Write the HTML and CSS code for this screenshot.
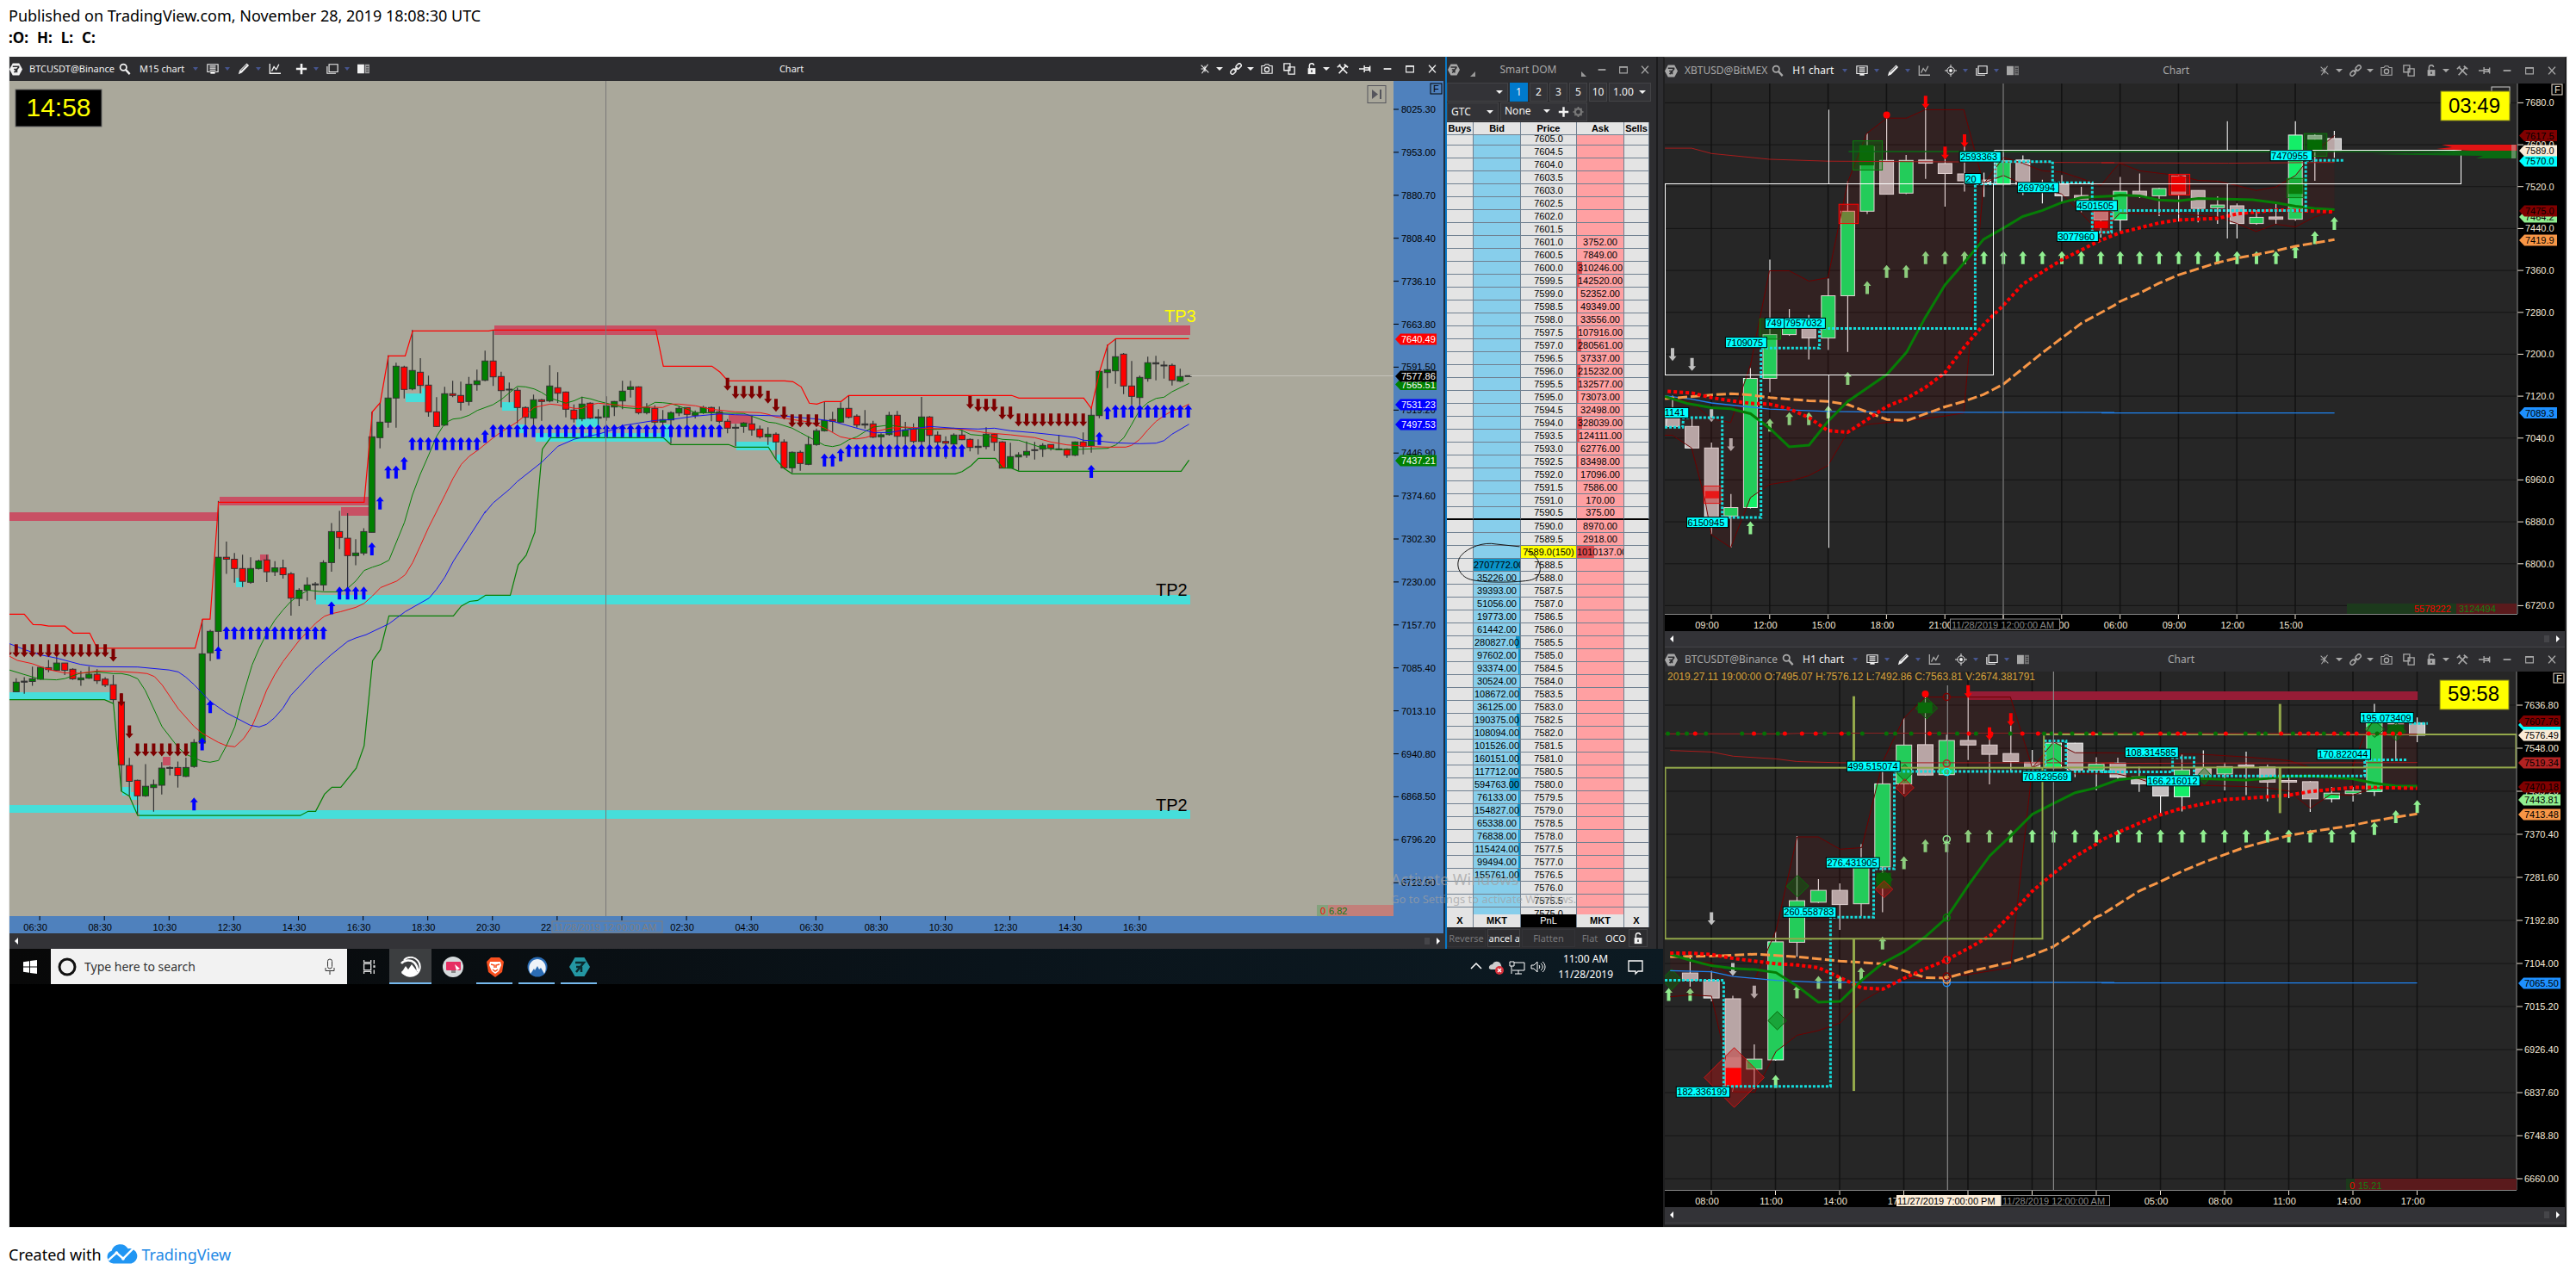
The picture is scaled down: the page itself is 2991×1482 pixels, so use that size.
FILE: index.html
```html
<!DOCTYPE html>
<html lang="en">
<head>
<meta charset="utf-8">
<title>TradingView snapshot</title>
<link rel="stylesheet" href="styles.css">
</head>
<body>
<svg class="sprite" aria-hidden="true">
  <symbol id="logo" viewBox="0 0 16 16"><path fill="currentColor" d="M4 .5h8l4 7.5-4 7.5H4L0 8z"/><path d="M4 4.5h8M12 4.5 6 12M5.500 8H10M9 8v4" stroke="#2d2d30" stroke-width="1.8" fill="none"/></symbol>
  <symbol id="search" viewBox="0 0 16 16"><circle cx="6" cy="6" r="4.200" fill="none" stroke="currentColor" stroke-width="2"/><path d="m9 9 5.500 6" stroke="currentColor" stroke-width="2.600"/></symbol>
  <symbol id="template" viewBox="0 0 16 16"><path d="M1 2h14v10H1zM4 4.500h8M4 7h8M4 9.500h8" fill="none" stroke="currentColor" stroke-width="1.300"/><path d="M5 12.500h6v2H5z" fill="currentColor"/></symbol>
  <symbol id="pencil" viewBox="0 0 16 16"><path d="m1 15 1.500-5L12 .5 15 3.500 5.500 13z" fill="currentColor"/><path d="m4 10.500 8-8" stroke="#2d2d30" stroke-width="1"/></symbol>
  <symbol id="indicator" viewBox="0 0 16 16"><path d="M1.500 1v13H16M4 11l3-6 3 4 3.500-7" fill="none" stroke="currentColor" stroke-width="1.500"/></symbol>
  <symbol id="plus" viewBox="0 0 16 16"><path d="M8 1v14M1 8h14" stroke="currentColor" stroke-width="3"/></symbol>
  <symbol id="target" viewBox="0 0 16 16"><circle cx="8" cy="8" r="4.800" fill="none" stroke="currentColor"/><circle cx="8" cy="8" r="2.200" fill="currentColor"/><path d="M8 0v4M8 12v4M0 8h4M12 8h4" stroke="currentColor"/></symbol>
  <symbol id="frames" viewBox="0 0 16 16"><path d="M3.500 2H15v10H3.500zM1 4.500V14h11.500" fill="none" stroke="currentColor" stroke-width="1.300"/></symbol>
  <symbol id="panel" viewBox="0 0 16 16"><path d="M0 2h9v12H0z" fill="currentColor"/><path d="M10 2h6v12h-6z" fill="currentColor" opacity=".55"/><path d="M11.500 5H15M11.500 8H15M11.500 11H15" stroke="#2d2d30"/></symbol>
  <symbol id="burst" viewBox="0 0 16 16"><path d="m3 3 10 10M12 2 4 14M8 4v8M3 8h4" stroke="currentColor" stroke-width="1.200"/></symbol>
  <symbol id="chain" viewBox="0 0 16 16"><g fill="none" stroke="currentColor" stroke-width="1.700" transform="rotate(-45 8 8)"><rect x="-1" y="5.500" width="8" height="5" rx="2.500"/><rect x="9" y="5.500" width="8" height="5" rx="2.500"/><path d="M5 8h6"/></g></symbol>
  <symbol id="camera" viewBox="0 0 16 16"><path d="M1 4h3.500L6 2h4l1.500 2H15v10H1z" fill="none" stroke="currentColor" stroke-width="1.300"/><circle cx="8" cy="9" r="3" fill="none" stroke="currentColor" stroke-width="1.500"/></symbol>
  <symbol id="copies" viewBox="0 0 16 16"><path d="M1 1h8v9H1zM7 5.500h8V15H7z" fill="none" stroke="currentColor" stroke-width="1.500"/></symbol>
  <symbol id="lock" viewBox="0 0 16 16"><path d="M3 7h10v8H3z" fill="currentColor"/><path d="M5 7V4a3 3 0 0 1 6-.5" fill="none" stroke="currentColor" stroke-width="1.700"/><path d="M8 9.500v3" stroke="#2d2d30" stroke-width="1.600"/></symbol>
  <symbol id="tools" viewBox="0 0 16 16"><path d="m3 3 11 11M13 3 3 14M1 6l4-4M10 2l5 4" stroke="currentColor" stroke-width="1.900"/></symbol>
  <symbol id="pin" viewBox="0 0 16 16"><path d="M0 8h7M7 3.500v9M7 6.500h6v3H7M14.500 4v8" fill="none" stroke="currentColor" stroke-width="1.600"/></symbol>
  <symbol id="min" viewBox="0 0 16 16"><path d="M3 8h10" stroke="currentColor" stroke-width="2"/></symbol>
  <symbol id="max" viewBox="0 0 16 16"><path d="M3 4h10v8.500H3z" fill="none" stroke="currentColor" stroke-width="1.300"/><path d="M3 4.500h10" stroke="currentColor" stroke-width="2"/></symbol>
  <symbol id="close" viewBox="0 0 16 16"><path d="m3.500 3 9 10M12.500 3l-9 10" stroke="currentColor" stroke-width="1.700"/></symbol>
  <symbol id="gear" viewBox="0 0 16 16"><circle cx="8" cy="8" r="4.500" fill="none" stroke="currentColor" stroke-width="3"/><path d="M8 .5v3M8 12.500v3M.5 8h3M12.500 8h3M3 3l2 2M11 11l2 2M13 3l-2 2M3 13l2-2" stroke="currentColor" stroke-width="2"/></symbol>
</svg>

<header class="published">
  <p>Published on TradingView.com, November 28, 2019 18:08:30 UTC</p>
  <p class="ohlc"><span>:O:</span> <span>H:</span> <span>L:</span> <span>C:</span></p>
</header>

<main class="desktop">
  <section class="monitor">
    <div class="windows">
      <article class="window window-active">
        <div class="titlebar small" data-symbol="BTCUSDT@Binance" data-period="M15 chart" data-pointer="plus"></div>
        <svg class="plot" id="chart-m15" viewBox="11 94 1667 990" role="img" aria-label="BTCUSDT M15 chart"></svg>
        <div class="scroll"><i></i><b></b><i class="fwd"></i></div>
      </article>

      <aside class="dom">
        <div class="dom-title"><svg class="icon logo"><use href="#logo"/></svg><i class="corner left"></i><h2>Smart DOM</h2><i class="corner"></i><button aria-label="Minimise"><svg class="icon"><use href="#min"/></svg></button><button aria-label="Maximise"><svg class="icon"><use href="#max"/></svg></button><button aria-label="Close"><svg class="icon"><use href="#close"/></svg></button></div>
        <div class="dom-row">
          <label class="drop size"><select aria-label="Preset"><option></option></select></label>
          <button class="lot on">1</button><button class="lot">2</button><button class="lot">3</button><button class="lot">5</button><button class="lot">10</button>
          <label class="drop amount"><select aria-label="Amount"><option>1.000</option></select></label>
        </div>
        <div class="dom-row">
          <label class="drop tif"><select aria-label="Time in force"><option>GTC</option></select></label>
          <div class="strategy"><label class="drop"><select aria-label="Strategy"><option>None</option></select></label><button aria-label="Add"><svg class="icon"><use href="#plus"/></svg></button><button class="dim" aria-label="Settings"><svg class="icon"><use href="#gear"/></svg></button></div>
        </div>
        <div class="ladder-box">
          <div class="ladder">
            <table>
              <colgroup><col class="c-side"><col class="c-size"><col class="c-price"><col class="c-size"><col class="c-sell"></colgroup>
              <thead><tr><th>Buys</th><th>Bid</th><th>Price</th><th>Ask</th><th>Sells</th></tr></thead>
              <tbody id="ladder"></tbody>
              <tfoot><tr><th>X</th><th>MKT</th><td class="pnl">PnL</td><th>MKT</th><th>X</th></tr></tfoot>
            </table>
          </div>
          <svg class="lasso" viewBox="0 0 100 50" aria-hidden="true"><path d="M73 5 45 2C30-1 12 6 4 15S0 38 12 43s52 5 72 2 16-27-2-35" fill="none" stroke="#111"/></svg>
        </div>
        <div class="dom-actions"><button class="off">Reverse</button><button class="cancel">Cancel all</button><button class="off flatten">Flatten</button><button class="off bare">Flat</button><button class="bare">OCO</button><button class="lockbtn" aria-label="Lock"><svg class="icon"><use href="#lock"/></svg></button></div>
      </aside>
      <div class="activate"><p>Activate Windows</p><p>Go to Settings to activate Windows.</p></div>
    </div>

    <nav class="taskbar">
      <button class="start" aria-label="Start"><svg viewBox="0 0 16 16"><path fill="#fff" d="M0 2.200 7 1.200v6.300H0zM8 1l8-1v7.500H8zM0 8.500h7v6.300l-7-1zM8 8.500h8V16l-8-1z"/></svg></button>
      <label class="find"><svg viewBox="0 0 22 22"><circle cx="11" cy="11" r="9" fill="none" stroke="#111" stroke-width="3"/></svg><input type="text" placeholder="Type here to search" aria-label="Type here to search"><svg class="mic" viewBox="0 0 16 20"><rect x="5.500" y="1" width="5" height="11" rx="2.500" fill="none" stroke="#333"/><path d="M3 11v3.500h10V11M8 15v4" fill="none" stroke="#333"/></svg></label>
      <button class="app tasks" aria-label="Task view"><svg viewBox="0 0 20 20"><path d="M4 6h9v8H4zM4 1v3h9V1M4 19v-3h9v3M17 1v5M17 14v5" fill="none" stroke="#ddd" stroke-width="1.500"/><path d="M16 8h2.500v3H16z" fill="#ddd"/></svg></button>
      <button class="app on" aria-label="Charting"><svg viewBox="0 0 24 24"><path d="M4 4A11 11 0 1 1 2 17" fill="none" stroke="#fff" stroke-width="2"/><path d="m1 19 5-8 3 4 4-6 7 9c-3 6-15 6-19 1z" fill="#fff"/><path d="M1 8c3-4 11-5 15-1s4 8 4 10" fill="none" stroke="#fff" stroke-width="2.500"/></svg></button>
      <button class="app" aria-label="Recorder"><svg viewBox="0 0 24 24"><circle cx="12" cy="12" r="12" fill="#d5dadc"/><rect x="4" y="6" width="17" height="10" rx="1" fill="#e62e62"/><path d="M10 16h5v3h-5z" fill="#888"/><path d="m14 9 6 5-4 2z" fill="#fff"/></svg></button>
      <button class="app run" aria-label="Brave"><svg viewBox="0 0 24 24"><path d="M7 1h10l5 5-2 12-8 6-8-6L2 6z" fill="#f9501f"/><path d="M6 6h12l1 4-3 7-4 3-4-3-3-7z" fill="#fff"/><path d="m7 9 4 1v3M17 9l-4 1v3M9 15l3 2 3-2" fill="none" stroke="#f9501f" stroke-width="1.500"/></svg></button>
      <button class="app run" aria-label="NordVPN"><svg viewBox="0 0 24 24"><circle cx="12" cy="12" r="11.500" fill="#2b6cb4"/><path d="M4 20C-1 10 6 3 12 3s13 7 8 17l-4-7-2 2-2-4-3 5-1-2z" fill="#fff" opacity=".92"/></svg></button>
      <button class="app run" aria-label="ATAS"><svg viewBox="0 0 24 24"><path d="M6.500 1h11L24 12l-6.500 11h-11L0 12z" fill="#2497a3"/><path d="M7 7h10L8 18M8 12h7M14 12v6" fill="none" stroke="#0b2c30" stroke-width="2.500"/></svg></button>
      <div class="tray">
        <svg viewBox="0 0 20 20"><path d="m5 12 6-6 6 6" fill="none" stroke="#fff" stroke-width="1.500"/></svg>
        <svg viewBox="0 0 20 20"><path d="M2 12c-1-4 3-5 4-5 2-5 9-4 10 1l1 5H4z" fill="#ccc"/><circle cx="14" cy="14" r="5" fill="#d8303a"/><path d="m12 12 4 4M16 12l-4 4" stroke="#fff" stroke-width="1.500"/></svg>
        <svg viewBox="0 0 20 20"><path d="M7 5h12v9H5M12 14v4M8 18h8M2 4h5v5H2zM4 9v9" fill="none" stroke="#fff"/></svg>
        <svg viewBox="0 0 20 20"><path d="M3 8h3l4-4v12l-4-4H3zM12 8c1 1 1 3 0 4M14 6c3 2 3 6 0 8M16 4c4 3 4 9 0 12" fill="none" stroke="#fff"/></svg>
        <p class="clock">11:00 AM<br>11/28/2019</p>
        <svg class="note" viewBox="0 0 20 20"><path d="M2 3h16v12h-5l-3 3v-3H2z" fill="none" stroke="#fff" stroke-width="1.300"/></svg>
      </div>
    </nav>
    <div class="void"></div>
  </section>

  <section class="side">
    <article class="window">
      <div class="titlebar wide" data-symbol="XBTUSD@BitMEX" data-period="H1 chart" data-pointer="target"></div>
      <svg class="plot" id="chart-xbt" viewBox="1933 97 1045 636" role="img" aria-label="XBTUSD H1 chart"></svg>
      <div class="scroll"><i></i><b></b><i class="fwd"></i></div>
    </article>
    <article class="window">
      <div class="titlebar" data-symbol="BTCUSDT@Binance" data-period="H1 chart" data-pointer="target"></div>
      <svg class="plot" id="chart-btc" viewBox="1933 781 1045 622" role="img" aria-label="BTCUSDT H1 chart"></svg>
      <div class="scroll"><i></i><b></b><i class="fwd"></i></div>
    </article>
  </section>
</main>

<footer class="created">Created with <a href="#"><svg viewBox="0 0 40 24" aria-hidden="true"><path d="M9 23a8 8 0 0 1-2-15.500A11 11 0 0 1 27 5a9 9 0 0 1 4 18z" fill="#2196f3"/><path d="m3 19 10-9 8 7L33 5" fill="none" stroke="#fff" stroke-width="2.500"/><circle cx="13" cy="10" r="2" fill="#fff"/><circle cx="21" cy="17" r="2" fill="#fff"/></svg>TradingView</a></footer>
<script src="charts.js"></script>
</body>
</html>
```
FILE: styles.css
```css
* { box-sizing: border-box; }
body { margin: 0; background: #fff; color: #000; font-family: "Noto Sans", "Open Sans", sans-serif; }
p, h2 { margin: 0; font-weight: normal; }
button { margin: 0; padding: 0; border: 0; background: none; color: inherit; font: inherit; }
.sprite { display: none; }
.icon { display: block; width: 14px; height: 14px; }

.published { padding: 6px 10px 8px; font-size: 18px; line-height: 25px; height: 65px; }
.ohlc { display: flex; gap: 10px; font-weight: bold; font-size: 17px; }

.desktop { display: grid; grid-template-columns: minmax(0, 1920fr) minmax(0, 1049fr); margin: 0 10px; border: 1px solid #e9eaea; background: #2d2d30; }
.monitor { display: flex; flex-direction: column; }
.windows { position: relative; display: grid; grid-template-columns: minmax(0, 1667fr) 253px; }
.void { flex: 1; background: #000; }
.window { min-width: 0; color: #a8a8a8; }
.window-active { color: #f2f2f2; }
.plot { display: block; width: 100%; height: auto; }
.side { padding-bottom: 2px; border: 2px solid #1f1f20; border-top: 1px solid #444; background: #2d2d30; }

.titlebar { display: flex; align-items: center; height: 28px; padding-right: 6px; background: #2d2d30; font-size: 12px; line-height: 16px; }
.titlebar.small { font-size: 11px; }
.titlebar.wide { height: 30px; }
.titlebar .logo { width: 15px; height: 15px; }
.symbol { margin-left: 8px; }
.titlebar > .find-symbol { margin: 0 10px 0 5px; }
.period { display: flex; align-items: center; gap: 10px; margin-right: 10px; color: #f2f2f2; }
.tool { display: flex; align-items: center; gap: 7px; width: 36px; color: #f2f2f2; }
.tool.plain { width: 31px; }
.tool.muted { color: inherit; }
.caret { border: 3px solid transparent; border-top: 4px solid #46558f; border-bottom: 0; }
.title { flex: 1; text-align: center; }
.act { display: flex; align-items: center; gap: 6px; width: 26px; }
.act.menu { width: 36px; }
.act:last-child { width: 16px; }
.act .caret { border-width: 4px 4px 0; border-top-color: currentColor; }

.scroll { display: flex; align-items: center; justify-content: space-between; height: 18px; padding: 0 6px; background: #333337; }
.side .scroll { height: 19px; border-bottom: 1px solid #444447; }
.scroll i { border: 4px solid transparent; border-left: 0; border-right: 4px solid #fff; }
.scroll i.fwd { border-right: 0; border-left: 4px solid #fff; }
.scroll b { width: 6px; height: 8px; margin-left: auto; margin-right: 8px; background: #454549; }

/* chart artwork */
.plot text { font: 11px "Liberation Sans", Arial, sans-serif; }
.plot .big { font-size: 20px; }
.plot .timer { font-size: 30px; }
.plot .timer-s { font-size: 24px; }
.plot .info { font-size: 12px; fill: #d8a23c; }
.plot polyline, .plot .o { fill: none; }

/* order ladder */
.dom { display: flex; flex-direction: column; padding-right: 14px; border-left: 2px solid #0a78c4; background: linear-gradient(90deg, #2d2d30 243px, #1c1c1e 243px 245px, #2d2d30 245px); color: #a8a8a8; font-size: 12px; line-height: 16px; }
.dom-title { display: flex; align-items: center; height: 30px; gap: 11px; }
.dom-title h2 { flex: 1; text-align: center; font-size: 12px; }
.dom-title .logo { width: 16px; }
.corner { align-self: flex-end; margin-bottom: 7px; border: 3px solid transparent; border-left-color: #999; border-bottom-color: #999; }
.corner.left { border-left-color: transparent; border-right-color: #999; }
.dom-row { display: flex; gap: 2px; height: 23px; padding-bottom: 1px; color: #f2f2f2; }
.drop { position: relative; display: block; height: 22px; border: 1px solid #434346; background: #333337; }
.drop::after { content: ""; position: absolute; right: 5px; top: 8px; border: 4px solid transparent; border-top-color: #f2f2f2; border-bottom: 0; }
.drop select { width: 100%; height: 20px; padding: 0 4px; appearance: none; border: 0; background: none; color: #f2f2f2; font: inherit; }
.size { width: 71px; }
.amount { width: 49px; }
.amount select { width: 32px; overflow: hidden; }
.tif { width: 60px; }
.lot { width: 21px; height: 22px; border: 1px solid #434346; background: #333337; }
.lot.on { background: #007acc; border-color: #007acc; }
.strategy { display: flex; align-items: center; gap: 4px; height: 22px; width: 101px; border: 1px solid #434346; background: #333337; }
.strategy .drop { width: 62px; border: 0; background: none; }
.strategy .icon { width: 13px; }
.dim { color: #777; }
.ladder-box { position: relative; flex: 1 1 0; min-height: 0; }
.ladder { height: 100%; overflow: hidden; }
.ladder table { width: 235px; border-collapse: separate; border-spacing: 0; table-layout: fixed; color: #000; font: 11px/13px "Liberation Sans", Arial, sans-serif; }
.c-side { width: 31px; }
.c-size { width: 55px; }
.c-price { width: 65px; }
.c-sell { width: 29px; }
.ladder th, .ladder td { height: 15px; padding: 0; border: solid #708090; border-width: 0 1px 1px 0; background-color: #e4e4e4; overflow: hidden; text-align: center; white-space: nowrap; }
.ladder th { font-weight: bold; }
.ladder thead th { position: sticky; top: 0; z-index: 1; }
.ladder tfoot th, .ladder tfoot td { position: sticky; bottom: 0; z-index: 1; border-bottom: 0; }
.ladder td.bid { background: linear-gradient(#0a93c9, #0a93c9) right / var(--depth, 0) 100% no-repeat #87ceeb; }
.ladder td.ask { background: linear-gradient(#dc4a4e, #dc4a4e) left / var(--depth, 0) 100% no-repeat #ffa0a2; }
.ladder td.last { background-color: #ff0; }
.ladder tr.spread td { border-bottom: 2px solid #000; }
.ladder td.pnl { background: #000; color: #fff; }
.lasso { position: absolute; left: 13px; top: 488px; width: 98px; height: 49px; overflow: visible; }
.dom-actions { display: flex; align-items: center; height: 25px; gap: 2px; color: #f2f2f2; font-size: 11px; white-space: nowrap; }
.dom-actions button { height: 21px; border: 1px solid #434346; overflow: hidden; }
.dom-actions .off { color: #77777a; width: 45px; border-color: #333337; }
.dom-actions .cancel { display: flex; align-items: center; justify-content: center; width: 38px; }
.dom-actions .off.flatten { width: 62px; }
.dom-actions .bare { width: 26px; border: 0; }
.dom-actions .off.bare { width: 30px; }
.dom-actions .lockbtn { display: grid; place-items: center; width: 22px; }
.activate { position: absolute; right: 86px; bottom: 48px; width: 230px; color: rgba(160, 160, 160, .7); font-size: 13px; line-height: 20px; white-space: nowrap; }
.activate p:first-child { font-size: 18px; line-height: 26px; }

/* windows taskbar */
.taskbar { display: flex; height: 41px; background: linear-gradient(90deg, #080808, #0a141b 60%, #0c1a22); color: #fff; }
.start { display: grid; place-items: center; width: 48px; }
.start svg { width: 16px; height: 16px; }
.find { display: flex; align-items: center; width: 344px; padding: 0 12px 0 8px; background: #f2f2f2; }
.find svg { width: 22px; height: 22px; }
.find input { flex: 1; min-width: 0; margin: 0 9px; padding: 0; border: 0; background: none; color: #333; font: 14px "Noto Sans", sans-serif; }
.find input::placeholder { color: #333; opacity: 1; }
.find .mic { width: 16px; height: 20px; }
.app { display: grid; place-items: center; width: 49px; padding-top: 2px; border-bottom: 2px solid transparent; }
.app svg { width: 24px; height: 24px; }
.app.tasks svg { width: 18px; height: 18px; }
.app.on { background: #3c3e40; border-color: #76b9ed; }
.app.run { border-image: linear-gradient(90deg, transparent 4px, #76b9ed 4px 44px, transparent 44px) 1; }
.tray { display: flex; align-items: center; gap: 4px; margin-left: auto; padding-right: 22px; }
.tray svg { width: 20px; height: 20px; }
.tray .note { margin-left: 12px; }
.clock { margin-left: 10px; font-size: 12px; line-height: 18px; text-align: center; }

.created { display: flex; align-items: center; gap: 5px; height: 56px; padding: 6px 10px 0; font-size: 18px; }
.created a { display: flex; align-items: center; gap: 4px; color: #1e88e5; text-decoration: none; }
.created svg { width: 38px; height: 24px; }
```
FILE: charts.js
```js
/* Title bars ------------------------------------------------------------- */
const icon = (id, cls = '') => `<svg class="icon ${cls}"><use href="#${id}"/></svg>`;
document.querySelectorAll('.titlebar').forEach(bar => {
  const tool = (id, caret = true, cls = '') =>
    `<button class="tool ${caret ? '' : 'plain'} ${cls}" aria-label="${id}">${icon(id)}${caret ? '<i class="caret"></i>' : ''}</button>`;
  const act = (id, caret) =>
    `<button class="act ${caret ? 'menu' : ''}" aria-label="${id}">${icon(id)}${caret ? '<i class="caret"></i>' : ''}</button>`;
  bar.innerHTML = icon('logo', 'logo') + `<span class="symbol">${bar.dataset.symbol}</span>` +
    `<button class="find-symbol" aria-label="Search">${icon('search')}</button>` +
    `<button class="period">${bar.dataset.period}<i class="caret"></i></button>` +
    tool('template') + tool('pencil') + tool('indicator', false, 'muted') + tool(bar.dataset.pointer) +
    tool('frames') + tool('panel', false, 'muted') + '<span class="title">Chart</span>' +
    act('burst', 1) + act('chain', 1) + act('camera') + act('copies') + act('lock', 1) +
    act('tools') + act('pin') + act('min') + act('max') + act('close');
});

/* Order ladder ------------------------------------------------------------ */
const asks = [3752, 7849, 310246, 142520, 52352, 49349, 33556, 107916, 280561, 37337, 215232, 132577, 73073,
  32498, 328039, 124111, 62776, 83498, 17096, 7586, 170, 375, 8970, 2918, 1010137];
const bids = [2707772, 35226, 39393, 51056, 19773, 61442, 280827, 97602, 93374, 30524, 108672, 36125, 190375,
  108094, 101526, 160151, 117712, 594763, 76133, 154827, 65338, 76838, 115424, 99494, 155761];
const peak = 2707772;
const cell = (side, v) => v === undefined ? `<td class="${side}"></td>`
  : `<td class="${side}" style="--depth:${Math.round(v / peak * 100)}%">${v.toFixed(2)}</td>`;
document.getElementById('ladder').innerHTML = Array.from({ length: 61 }, (_, i) => {
  const price = 7605 - i / 2;
  const last = price === 7589;
  return `<tr${price === 7590.5 ? ' class="spread"' : ''}><td></td>${cell('bid', bids[i - 33])}` +
    `<td${last ? ' class="last"' : ''}>${price.toFixed(1)}${last ? '(150)' : ''}</td>${cell('ask', asks[i - 8])}<td></td></tr>`;
}).join('');
document.querySelector('.ladder').scrollTop = 3;

/* Drawing helpers --------------------------------------------------------- */
const r1 = n => Math.round(n * 10) / 10;
const frame = (x0, kx, y0, ky) => ({ x: v => r1(x0 + v / kx), y: v => r1(y0 + v / ky) });
const text = (x, y, s, fill = '#000', anchor = 'start', cls = '') =>
  `<text x="${r1(x)}" y="${r1(y)}" fill="${fill}" text-anchor="${anchor}" class="${cls}">${s}</text>`;
const rect = (x, y, x2, y2, fill, extra = '') =>
  `<rect x="${r1(x)}" y="${r1(y)}" width="${r1(x2 - x)}" height="${r1(y2 - y)}" fill="${fill}" ${extra}/>`;
const seg = (x, y, x2, y2, stroke, w = 1) =>
  `<path d="M${r1(x)} ${r1(y)}L${r1(x2)} ${r1(y2)}" stroke="${stroke}" stroke-width="${w}"/>`;
const pts = parts => parts.map(([f, s]) => s.split(' ').map(p => {
  const [x, y] = p.split(',');
  return f.x(+x) + ',' + f.y(+y);
}).join(' ')).join(' ');
const line = (parts, stroke, w = 1, dash = '') =>
  `<polyline points="${pts(parts)}" stroke="${stroke}" stroke-width="${w}" stroke-dasharray="${dash}"/>`;
const up = (x, y, fill) => `<path d="M${r1(x)} ${y}l4.500 5.500h-2.500v9.500h-4v-9.500h-2.500z" fill="${fill}"/>`;
const down = (x, y, fill) => `<path d="M${r1(x)} ${y + 15}l4.500-5.500h-2.500v-9.500h-4v9.500h-2.500z" fill="${fill}"/>`;
/* runs: "first..last:y" or "index:y" */
const arrows = (draw, f, bar, runs, fill) => runs.split(' ').map(r => {
  const [span, y] = r.split(':');
  const [a, b = a] = span.split('..').map(Number);
  let out = '';
  for (let i = a; i <= b; i++) out += draw(bar(i), f.y(+y), fill);
  return out;
}).join('');
/* rows: high, body top, body bottom, low, kind */
const candles = (f, bar, first, rows, w, skin) => rows.split('|').map((row, n) => {
  const c = row.trim().split(/[ ,]+/);
  const x = bar(first + n), [h, t, b, l] = c.slice(0, 4).map(v => f.y(+v));
  const s = skin[c[4]];
  return seg(x, h, x, l, s.wick, 1.2) + rect(x - w / 2, t, x + w / 2, Math.max(b, t + 1), s.body, `stroke="${s.wick}" stroke-width="1"`);
}).join('');
const tag = (x, y, w, s, fill, ink) =>
  `<path d="M${x} ${r1(y)}l6-6.500h${w}v13h-${w}z" fill="${fill}"/>` + text(x + 7, y + 4, s, ink);

/* M15 chart --------------------------------------------------------------- */
{
  const A = frame(0, 1.8447, 560, 2.6133), B = frame(400, 2.4123, 360, 3), C = frame(1000, 2.2725, 360, 3);
  const bar = i => 47 + 9.385 * i;
  const skin = { g: { body: '#008000', wick: '#333' }, r: { body: '#f00', wick: '#333' }, d: { body: '#333', wick: '#333' } };
  const pink = '#c85064', aqua = '#46deda';
  let s = rect(11, 94, 1618, 1064, '#aaa89b') + rect(1618, 94, 1676, 1084, '#4f81bd') + rect(11, 1064, 1676, 1084, '#4f81bd') +
    rect(1676, 94, 1678, 1084, '#1e2f44');
  [[11, 595, 254, 605], [255, 577, 428, 587], [396, 589, 428, 599], [574, 378, 1382, 389], [302, 644, 312, 651],
    [189, 879, 198, 889], [846, 482, 874, 492]].forEach(z => s += rect(...z, pink));
  [[11, 804, 129, 813], [11, 935, 162, 944], [162, 941, 1382, 951], [367, 691, 1382, 702], [274, 671, 283, 682], [142, 914, 152, 924],
    [152, 920, 161, 929], [471, 457, 494, 467], [490, 451, 498, 460], [583, 467, 600, 477], [601, 493, 610, 503], [622, 503, 780, 513],
    [669, 486, 696, 496], [771, 493, 779, 503], [855, 513, 902, 523], [902, 528, 908, 538]].forEach(z => s += rect(...z, aqua));
  s += candles(A, bar, -3, `595 607 636 636 g|592 604 607 642 d|560 597 605 618 g|560 562 598 600 g|540 563 569 577 r|530 549 571 571 g|550 549 571 585 r|565 568 597 600 r|573 594 600 618 g|560 583 595 597 g|568 583 603 612 r|592 598 616 622 r|585 615 660 672 r|640 668 858 938 r|837 860 908 952 r|903 905 952 1010 r|856 923 952 955 g|903 918 927 1000 g|850 868 920 948 g|862 866 868 890 d|848 866 890 927 r|836 866 893 895 g|780 790 863 867 g|417 521 792 795 g|448 453 518 543 g|57 228 453 500 g|180 228 234 278 r|215 234 262 305 r|220 262 301 318 r|228 262 304 308 g|235 239 262 265 g|220 236 272 303 r|240 260 272 285 g|235 260 281 293 r|273 278 352 405 r|322 328 353 376 g|289 312 328 360 g|303 309 312 357 d|237 244 312 330 g|124 150 244 272 g|87 150 168 203 r|94 170 223 320 r|173 215 223 252 g|140 150 215 222 g`, 7, skin);
  s += candles(B, bar, 41, `355 442 775 775 g|323 391 445 482 g|158 307 391 410 g|184 196 307 410 g|194 199 277 308 r|70 211 275 280 g|168 217 263 290 r|229 262 355 372 r|304 355 406 408 r|268 292 401 404 g|247 292 298 304 r|250 298 322 350 r|233 259 319 333 g|208 247 260 281 g|142 178 245 248 g|70 178 233 265 r|215 232 281 340 r|253 276 278 322 d|270 280 340 395 r|336 340 374 400 r|295 313 377 403 g|310 313 319 386 r|193 265 317 322 g|217 271 290 324 r|284 286 346 374 r|329 349 380 392 r|302 328 379 388 g|322 325 377 380 r|346 373 377 400 d|301 334 374 386 g|317 319 338 370 g|247 283 317 346 g|247 268 277 305 g|266 268 358 364 r|325 340 358 364 g|332 343 391 400 r|349 382 391 403 g|353 358 383 466 g|335 343 359 370 g|340 340 364 400 r|350 358 367 378 g|334 340 358 362 g|337 340 355 388 r|337 355 388 395 r|380 388 412 430 r|397 409 412 475 d|391 394 406 428 g|370 397 418 438 r|403 415 442 448 r|409 433 442 470 g|427 433 460 520 r|451 460 550 553 r|493 496 550 568 g|490 496 535 560 r|440 469 538 541 g|413 421 469 473 g|319 385 421 424 g|355 382 388 425 r|322 343 391 394 g|300 343 374 378 r|364 370 401 410 r|349 397 401 413 d|386 397 443 446 r|430 435 442 470 g|355 367 434 438 g|352 367 440 470 r|390 418 440 468 g|395 415 458 465 r|303 373 458 470 g|370 373 437 470 r|423 436 460 470 r|440 458 464 518 r|430 436 467 470 g|418 436 452 454 r|448 451 479 493 r|451 475 479 503 d|409 433 476 485 g|430 433 461 491 r|457 460 551 551 r|463 511 551 551 g|496 505 512 560 g|458 493 506 515 g|460 487 490 521 d|464 472 485 512 g|468 469 481 490 r|435 484 486 487 d|482 485 506 515 r|458 460 506 509 g|427 460 476 503 r|342 367 473 497 g|210 214 368 377 g|121 208 218 272 g|100 163 212 257 g|150 154 265 293 r|178 265 301 330 r|229 235 305 330 g|163 184 239 250 g|160 184 188 245 d|178 192 194 239 d|187 193 245 263 r|205 232 248 251 g|229 229 231 231 d`, 7, skin);
  s += line([[A, '20,401 52,401 71,432 88,433 104,437 139,437 157,458 192,458 208,504 418,504 434,416 450,416 468,61 780,61'],
    [B, '78,355 100,323 123,160 170,160 191,73 404,73 416,70 872,70 893,196 1029,196 1052,217 1074,247 1233,247 1256,250 1279,268 1302,325 1323,328 1345,319 1391,319 1412,298'],
    [C, '397,298 416,307 587,307 607,343 629,214 650,123 672,100 865,100']], '#f00', 1.2);
  s += line([[A, '20,660 224,660 243,672 260,938 277,953 295,1012 643,1012 660,999 676,999 695,947 711,926 730,926 763,868 780,800 798,542 815,508 833,406 971,406 988,376 1006,362 1023,359 1040,343 1093,343 1110,251 1127,222 1145,154'],
    [B, '533,775 554,485 577,445 893,445 914,469 1076,469 1094,478 1187,478 1208,520 1232,553 1254,571'],
    [C, '248,571 266,563 290,542 309,517 354,517 373,550 396,551 416,562 844,562 865,523']], '#078007', 1.2);
  s += line([[A, '20,570 50,583 86,598 121,600 139,596 172,580 208,576 243,581 260,581 277,586 295,597 311,632 347,742 382,806 398,826 433,847 450,850 468,845 485,800 503,742 520,650 540,555 555,505 571,460 588,420 606,388 623,362 641,343 660,328 693,333 730,333 745,322 762,300 780,268 798,258 815,250 833,237'],
    [B, '145,810 168,740 190,645 212,573 236,505 258,440 282,393 304,380 325,377 349,367 372,350 416,330 439,312 484,266 507,268 531,275 552,287 576,307 620,325 644,316 665,304 690,310 711,318 757,332 779,340 824,344 846,338 870,322 891,323 914,326 937,335 960,346 983,358 1005,358 1119,361 1140,370 1187,391 1208,394 1254,412 1278,428 1345,472 1367,476 1389,470 1413,452 1435,442 1459,423 1481,408 1526,401'],
    [C, '95,405 138,415 202,416 245,412 266,420 289,434 330,439 351,445 373,451 415,454 458,472 479,481 522,487 566,486 607,484 650,482 672,470 693,445 713,400 735,348 756,323 778,308 799,304 820,285 843,270 865,256']], '#078007');
  s += line([[A, '20,528 37,541 69,551 104,569 139,579 172,580 208,573 243,574 295,578 315,581 331,590 347,615 382,688 416,742 433,762 468,790 485,800 503,803 522,778 540,740 555,690 571,632 588,585 606,545 641,480 676,428 695,407 711,399 730,393 762,380 780,368 798,345 815,320 850,300 868,281'],
    [B, '191,880 212,823 236,757 258,702 282,643 304,587 327,538 349,510 372,490 416,446 439,425 484,390 507,366 531,340 576,328 598,331 644,343 665,343 690,330 711,325 824,338 891,340 914,328 937,328 983,334 1027,346 1094,355 1164,358 1187,364 1208,373 1254,382 1300,390 1345,412 1389,442 1413,448 1435,449 1459,445 1481,436'],
    [C, '32,425 75,412 117,408 181,413 266,415 330,428 394,435 458,445 500,460 543,470 607,476 650,478 698,478 713,472 735,451 756,418 778,388 799,368 820,352 843,342 865,328']], '#f01414');
  s += line([[A, '20,490 52,508 86,524 121,534 172,553 208,560 295,561 362,570 382,576 398,592 416,615 450,665 485,700 536,738 555,743 571,735 588,715 606,686 623,647 641,620 675,568 710,523 745,483 762,473 784,463 833,430 868,393 919,352 935,325 953,288 971,240 1006,163 1040,88'],
    [B, '393,707 416,673 462,625 484,598 552,531 598,475 644,450 711,433 757,415 779,403 824,394 870,385 914,382 983,370 1051,362 1094,365 1187,368 1233,370 1323,380 1367,388 1435,412 1481,427'],
    [C, '32,428 75,427 117,418 181,406 245,412 308,415 351,412 394,421 458,428 522,437 566,445 586,454 628,457 672,463 735,466 778,464 799,455 820,433 865,398']], '#1414f0');
  s += arrows(up, A, bar, '19:957 20:775 21:662 22:498 23..35:438 36:362 37..40:317 41:183 42:44', '#00f') +
    arrows(up, B, bar, '43..44:542 45:512 46..54:443 55:418 56..84:398 97..98:500 99:482 100..114:467 130:540 131:425 132:336 133..142:330', '#00f') +
    arrows(down, A, bar, '-4..8:492 9:506 10:641 11:738 12..18:793', '#7d0000') +
    arrows(down, B, bar, '85:236 86..89:265 90:281 91:310 92:337 93..96:364 115:300 116..118:310 119..120:337 121..129:361', '#7d0000');
  s += seg(703.5, 94, 703.5, 1064, '#7b7878') + seg(1382, 436.5, 1618, 436.5, '#c4c2ba');
  s += text(1352, 374, 'TP3', '#ff0', 'start', 'big') + text(1342, 692, 'TP2', '#000', 'start', 'big') + text(1342, 942, 'TP2', '#000', 'start', 'big');
  s += rect(18, 104, 118, 147, '#000', 'stroke="#666"') + text(68, 135, '14:58', '#ff0', 'middle', 'timer');
  s += rect(1588, 99.5, 1609, 119.5, 'none', 'stroke="#55555c"') + `<path d="M1593 104v11l7-5.500z" fill="#55555c"/>` + seg(1603, 104, 1603, 115, '#55555c', 2);
  s += rect(1661, 97, 1674, 109, 'none', 'stroke="#000"') + text(1664, 107, 'F', '#000');
  for (let i = 0; i < 19; i++) {
    const y = 127 + 49.9 * i;
    s += seg(1618, y, 1624, y, '#000') + text(1627, y + 4, (8025.3 - 72.3 * i).toFixed(2));
  }
  s += tag(1620, 446.5, 42, '7565.51', '#008000', '#fff') + tag(1620, 394, 42, '7640.49', '#f00', '#fff') + tag(1620, 437, 42, '7577.86', '#000', '#fff') +
    tag(1620, 470, 42, '7531.23', '#00f', '#fff') + tag(1620, 493, 42, '7497.53', '#00f', '#fff') + tag(1620, 535, 42, '7437.21', '#008000', '#fff');
  s += rect(1529, 1051, 1542, 1064, '#84a27d') + rect(1542, 1051, 1618, 1064, '#c27f7a') + text(1533, 1062, '0', '#f00') + text(1543, 1062, '6.82', '#107a10');
  ['06:30', '08:30', '10:30', '12:30', '14:30', '16:30', '18:30', '20:30', '22', '', '02:30', '04:30', '06:30', '08:30', '10:30', '12:30', '14:30', '16:30'].forEach((t, i) => {
    const x = 46.1 + 75.1 * i;
    s += seg(x, 1064, x, 1069, '#000') + (t === '22' ? text(x - 19, 1081, t) : text(x - 5, 1081, t, '#000', 'middle'));
  });
  s += rect(641, 1070, 769, 1083, 'none', 'stroke="#7f7f7f"') + text(643, 1081, '11/28/2019 12:00:00 AM', '#7f7f7f');
  document.getElementById('chart-m15').innerHTML = s;
}

/* Shared look of the two H1 charts ---------------------------------------- */
const dark = { g: { body: '#14ee68', wick: '#f4f4f4' }, w: { body: '#c4c0c0', wick: '#f4f4f4' } };
const cyanBox = (f, x, y, x2, s) => rect(f.x(x), f.y(y), f.x(x2), f.y(y) + 12, '#0ff', 'stroke="#000"') + text(f.x(x) + 1, f.y(y) + 10, s);
const diamond = (f, x, y, rx, ry, c) => {
  const X = f.x(x), Y = f.y(y), a = f.x(x + rx) - X, b = f.y(y + ry) - Y;
  return `<path d="M${X - a} ${Y}L${X} ${Y - b}L${X + a} ${Y}L${X} ${Y + b}z" fill="${c}" fill-opacity=".4" stroke="${c}"/>`;
};
const pane = (top, base, foot, wall) => rect(1933, top, 2978, foot, '#000') + rect(1933, top, wall, base, '#262626');

/* XBTUSD H1 --------------------------------------------------------------- */
{
  const A = frame(1925, 2.9585, 60, 2.24), B = frame(2440, 2.8457, 60, 2.24);
  const bar = i => 1987.2 + 22.6 * i;
  let s = pane(97, 713.5, 733, 2923);
  for (let i = 0; i < 13; i++) {
    const y = 119.4 + 48.67 * i;
    s += seg(1933, y, 2923, y, '#151515') + seg(2923, y, 2930, y, '#f3e8d8') + text(2932, y + 4, (7680 - 80 * i).toFixed(1), '#f3e8d8');
  }
  for (let i = 0; i < 11; i++) s += seg(1987 + 67.8 * i, 97, 1987 + 67.8 * i, 713, '#121212', 1.5);
  s += candles(A, bar, -2, `895 948 975 975 w|955 975 1031 1031 w|1017 1031 1215 1255 w|1151 1186 1208 1290 g|823 850 1186 1188 g|541 736 850 886 g|670 720 736 739 g|685 708 745 801 w|590 635 745 776 g|337 415 635 781 g|213 247 415 422 g|165 283 371 372 w|269 283 368 371 g|118 282 290 331 w|250 291 317 403 w|230 318 336 364 w|315 334 342 378 w|260 284 345 348 g|270 282 345 373 w|333 350 355 395 w|321 345 375 390 w|352 374 387 418 w|400 410 438 484 w|326 363 438 470 g|317 363 375 381 w|354 356 375 428 g|320 323 372 442 w|361 361 408 444 w|376 399 406 448 g|395 401 447 486 w|412 431 447 450 g|396 430 436 448 w|181 217 436 440 g|215 218 228 336 w|206 226 257 276 w`, 16, dark);
  s += arrows(up, A, bar, '2:1222 3:955 4..5:938 6:921 7:833 8:597 9..10:555 11..29:519 30:504 31:467 32:430', '#90ee90') +
    arrows(down, A, bar, '-2:771 -1:797 0:930 1:1006', '#c0c0c0');
  const top = '49,900 120,915 184,955 250,965 318,815 383,570 451,570 519,597 584,588 652,340 717,213 786,173 854,173 918,151 1051,151 1119,345 1187,275 1253,290 1321,310 1386,313 1454,330 1522,348 1568,305';
  const top2 = '61,290 126,310 189,316 254,322 320,335 383,337 448,348 511,361 576,352 641,322 704,260 770,218';
  const low = '24,998 49,998 116,1031 160,1160 184,1257 250,1290 318,1160 383,1126 451,1118 519,1103 584,1077 652,990 717,970 854,960 986,948 1051,940 1119,342 1187,322 1253,345 1386,370 1454,420 1522,475';
  const low2 = '40,438 61,420 189,422 254,422 383,430 448,447 511,468 576,449 641,456 704,430 770,415';
  const back = str => str.split(' ').reverse().join(' ');
  s += `<polygon points="${pts([[A, top], [B, top2], [B, back(low2)], [A, back(low)]])}" fill="#7a0c0c" fill-opacity=".15"/>`;
  s += line([[A, top], [B, top2]], '#6e0000') + line([[A, low], [B, low2]], '#6e0000');
  [[A, 670, 232, 771, 308, '#0a7a0a'], [A, 350, 695, 422, 748, '#0a7a0a'], [A, 622, 397, 688, 447, '#f00'], [A, 158, 1130, 218, 1175, '#e01010'], [A, 1492, 415, 1560, 472, '#e01010'],
    [B, 223, 319, 292, 373, '#f00'], [B, 613, 330, 677, 380, '#0a7a0a'], [B, 670, 213, 745, 272, '#0a7a0a']]
    .forEach(([f, x, y, x2, y2, c]) => s += rect(f.x(x), f.y(y), f.x(x2), f.y(y2), c, `fill-opacity=".35" stroke="${c}"`));
  s += rect(A.x(692), A.y(243), A.x(742), A.y(296), '#0a6a08') + rect(A.x(162), A.y(1143), A.x(210), A.y(1162), '#e81818') + rect(A.x(1499), A.y(441), A.x(1546), A.y(459), '#e00') +
    rect(B.x(231), B.y(325), B.x(278), B.y(364), '#e80000') + rect(B.x(618), B.y(343), B.x(665), B.y(370), '#0a7a0a') + rect(B.x(680), B.y(229), B.x(729), B.y(257), '#046a04');
  s += line([[A, '24,251 116,251 184,265 384,280 584,285 1568,289'], [B, '0,289 420,290 770,288']], '#a81c1c');
  s += line([[A, '24,895 116,904 184,914 384,930 584,936 786,938 1568,939'], [B, '0,940 770,940']], '#1e82f0', 1.3);
  s += line([[A, '24,903 184,893 250,890 318,893 384,900 519,908 584,910 652,918 717,937 786,957 854,960 986,924 1051,910 1119,892 1187,865 1321,783 1454,707 1568,660'], [B, '61,650 126,628 189,603 254,581 383,549 448,537 511,528 576,518 641,506 704,498 770,489']], '#f79646', 3, '11 4');
  s += line([[A, '24,897 100,915 184,926 250,929 318,942 384,980 451,1028 519,1024 584,962 652,910 786,840 854,782 918,692 986,607 1051,550 1119,488 1187,459 1253,429 1321,413 1386,393 1454,380 1568,375'], [B, '61,373 126,375 189,386 254,388 320,382 500,385 576,393 641,402 704,408 770,411']], '#067d06', 3);
  s += line([[A, '33,884 116,888 184,900 250,908 318,915 384,917 451,929 519,952 584,986 652,990 717,958 786,923 854,902 918,874 986,835 1051,770 1119,710 1187,660 1253,605 1386,542 1522,490'], [B, '0,490 61,471 189,446 254,438 383,434 448,422 576,412 641,413 770,417']], '#f00', 4, '4 3');
  s += line([[A, '24,977 85,977 88,952 221,952 221,1212 354,1212 354,771 555,771 555,720 1090,720 1090,344 1158,344 1158,286 1356,286 1356,341 1492,341 1492,470 1558,470 1558,413'], [B, '34,413 675,413 675,283 800,283']], '#14dede', 3, '3 2');
  s += seg(A.x(655), A.y(260), B.x(1190), A.y(260), '#0a6a14', 1.5) + seg(2326, 97, 2326, 725, '#888', 1.2);
  s += seg(A.x(587), A.y(151), A.x(587), A.y(345), '#fff') + seg(A.x(587), A.y(841), A.x(587), A.y(1291), '#fff') + seg(B.x(416), B.y(181), B.x(416), B.y(256), '#fff') + seg(B.x(416), B.y(345), B.x(416), B.y(486), '#fff');
  s += rect(1933.5, 213.5, 2314.5, 435.5, 'none', 'stroke="#fff"') + rect(2316, 174.5, 2857.5, 213.5, 'none', 'stroke="#fff"');
  s += arrows(down, A, bar, '11:115 12:247 13:215', '#f00') + `<ellipse cx="${bar(9)}" cy="133.500" rx="4" ry="4" fill="#f00"/>`;
  [['1141', 20, 926, 106], ['7109075', 232, 743, 374], ['749', 368, 693, 436], ['7957032', 434, 693, 575], ['6150945', 99, 1211, 241], ['2593363', 1036, 260, 1178], ['20', 1054, 317, 1110], ['2697994', 1235, 340, 1377], ['4501505', 1436, 387, 1578], ['3077960', 1371, 467, 1513]]
    .forEach(([t, x, y, x2]) => s += cyanBox(A, x, y, x2, t));
  s += cyanBox(B, 558, 257, 696, '7470955');
  s += `<path d="M2922 168h-87l12 3-18 2 40 2h53z" fill="#e01414"/><path d="M2922 175H2830l18 2-95 2 130 2-8 3h47z" fill="#0a6a12"/><path d="M2916 168h5v16h-5z" fill="#b8b0b0" opacity=".5"/>`;
  s += rect(2893, 101, 2914, 120, 'none', 'stroke="#ccc"') + rect(2834, 106, 2914, 140, '#ff0', 'stroke="#7a7a20"') + text(2873, 131, '03:49', '#000', 'middle', 'timer-s');
  s += seg(2923, 97, 2923, 713, '#888') + seg(1933, 713.5, 2923, 713.5, '#888') + rect(2963, 98, 2975, 110, 'none', 'stroke="#f3e8d8"') + text(2966, 108, 'F', '#f3e8d8');
  s += rect(2725, 701, 2852, 713, '#1c3a1c') + rect(2852, 701, 2922, 713, '#5a1a1c') + text(2803, 711, '5578222', '#f00') + text(2855, 711, '3124494', '#128012');
  s += tag(2925, 252, 38, '7464.2', '#90ee90', '#000') + tag(2925, 157.5, 38, '7617.5', '#800000', '#000') + tag(2925, 187, 38, '7570.0', '#0ff', '#000') + tag(2925, 175, 38, '7589.0', '#faebd7', '#000') +
    tag(2925, 245, 38, '7475.0', '#800000', '#000') + tag(2925, 279, 38, '7419.9', '#f79646', '#000') + tag(2925, 479.5, 38, '7089.3', '#1e90ff', '#000');
  ['09:00', '12:00', '15:00', '18:00', '21:00', '', '03:00', '06:00', '09:00', '12:00', '15:00'].forEach((t, i) => {
    const x = 1987 + 67.8 * i;
    s += seg(x, 714, x, 719, '#f3e8d8') + text(x - 5, 730, t, '#f3e8d8', 'middle');
  });
  s += rect(2264.5, 719, 2391.5, 731.5, '#000', 'stroke="#888"') + text(2266, 730, '11/28/2019 12:00:00 AM', '#888');
  document.getElementById('chart-xbt').innerHTML = s;
}

/* BTCUSDT H1 -------------------------------------------------------------- */
{
  const A = frame(1925, 2.9585, 740, 2.24), B = frame(2440, 2.8457, 740, 2.1132);
  const bar = i => 1987.2 + 24.83 * i;
  const olive = '#93a84a';
  let s = pane(781, 1383.5, 1403, 2922);
  for (let i = 0; i < 12; i++) {
    const y = 820 + 50 * i;
    s += seg(1933, y, 2922, y, '#151515') + seg(2922, y, 2929, y, '#f3e8d8') + text(2931, y + 4, (7636.8 - 88.8 * i).toFixed(2), '#f3e8d8');
  }
  for (let i = 0; i < 12; i++) s += seg(1987 + 74.5 * i, 781, 1987 + 74.5 * i, 1383, '#121212', 1.5);
  s += rect(A.x(1068), 804, B.x(1045), 814, '#961c36');
  s += candles(A, bar, -1, `827 876 895 912 w|870 895 941 950 w|935 943 1170 1185 w|1062 1100 1126 1178 g|768 795 1102 1104 g|520 688 796 834 g|632 661 692 694 g|643 661 698 764 w|541 600 696 728 g|350 384 600 718 g|213 283 384 410 g|150 282 361 362 w|256 271 360 362 g|158 271 283 322 w|262 283 307 385 w|232 305 326 352 w|296 328 342 360 w|270 278 342 345 g|277 278 348 366 w|315 333 348 401 g`, 18, dark);
  s += candles(B, bar, 19, `298 311 346 350 w|320 345 362 382 w|360 365 392 435 w|290 328 394 430 g|280 325 340 352 w|310 320 338 378 g|283 316 320 390 w|315 321 358 405 w|345 354 358 397 w|355 357 399 431 w|370 385 399 408 g|370 380 386 406 g|166 212 381 392 g|210 213 215 305 w|199 213 243 260 w`, 18, dark);
  s += arrows(up, A, bar, '-2..-1:915 3:1141 4:908 5..6:884 7:861 8:781 9:572 10..11:528 12..30:503', '#90ee90') + arrows(up, B, bar, '31:456 32:427 33:402', '#90ee90') +
    arrows(down, A, bar, '0:718 1:850 2:909', '#c0c0c0');
  const top = '42,825 110,845 184,850 259,885 333,892 406,765 478,522 551,522 626,554 700,550 773,325 845,213 918,158 1211,158 1286,342 1359,275 1433,303 1568,303';
  const top2 = '90,288 125,287 337,290 476,296 619,305 690,322 829,322 870,240 900,205 971,213 1043,213';
  const low = '42,938 110,933 184,936 259,1185 333,1186 406,1080 478,1038 551,1026 626,1006 700,950 773,918 845,890 918,890 1066,880 1211,862 1286,342 1359,317 1433,358 1568,358';
  const low2 = '52,338 125,350 190,366 337,366 476,369 547,372 619,380 690,422 758,388 829,390 870,380 900,372 1043,375';
  const back = str => str.split(' ').reverse().join(' ');
  s += `<polygon points="${pts([[A, top], [B, top2], [B, back(low2)], [A, back(low)]])}" fill="#7a0c0c" fill-opacity=".15"/>`;
  s += line([[A, top], [B, top2]], '#6e0000') + line([[A, low], [B, low2]], '#6e0000');
  const gr = '#0a6a0a', rd = '#c81414';
  s += diamond(A, 480, 650, 38, 28, gr) + diamond(A, 923, 187, 38, 28, gr) + rect(A.x(893), A.y(172), A.x(943), A.y(200), gr) + diamond(A, 848, 355, 28, 22, gr) + diamond(A, 848, 394, 32, 23, rd) +
    rect(A.x(750), A.y(615), A.x(801), A.y(656), '#0c5a08') + diamond(A, 775, 633, 30, 24, gr) + diamond(A, 777, 658, 30, 22, rd) + diamond(A, 410, 1000, 32, 24, gr) + diamond(A, 47, 893, 34, 27, gr) +
    diamond(A, 262, 1148, 103, 78, rd) + rect(A.x(233), A.y(1095), A.x(286), A.y(1123), '#cc7676') + rect(A.x(233), A.y(1123), A.x(286), A.y(1172), '#f00') +
    diamond(B, 340, 343, 25, 20, gr) + diamond(B, 903, 228, 32, 20, gr) + rect(B.x(945), B.y(217), B.x(1000), B.y(244), '#0c5a08') + diamond(B, 974, 234, 32, 22, gr);
  s += line([[A, '42,297 184,301 259,312 406,319 478,326 626,329 1568,329'], [B, '0,312 1043,310']], '#a81c1c');
  s += line([[A, '42,870 184,873 259,885 406,895 551,900 1568,901'], [B, '0,851 1043,851']], '#1e82f0', 1.3);
  s += line([[A, '42,834 184,832 333,827 478,834 626,845 773,852 845,870 918,888 992,889 1066,873 1211,848 1286,830 1359,807 1433,770 1507,730'], [B, '0,684 125,625 195,602 266,577 337,555 476,517 547,503 619,489 690,480 829,464 900,453 971,444 1043,436']], '#f79646', 3, '11 4');
  s += line([[A, '42,827 110,843 184,857 259,864 333,867 406,875 478,910 551,952 626,950 700,895 773,850 845,821 918,782 992,732 1066,648 1140,571 1211,520 1286,463 1359,435 1433,407 1507,394'], [B, '0,367 52,353 125,346 266,346 337,350 476,353 547,349 619,344 690,343 829,350 900,360 971,367 1043,368']], '#067d06', 3);
  s += line([[A, '42,824 110,824 184,828 259,838 406,852 478,855 551,862 626,888 700,915 773,918 845,890 918,865 992,842 1066,812 1140,780 1211,725 1286,663 1359,617 1433,573 1507,540'], [B, '0,500 52,482 125,459 195,438 266,422 405,401 547,394 619,390 690,381 829,371 900,371 1043,373']], '#f00', 4, '4 3');
  s += line([[A, '24,895 226,895 226,1171 593,1171 593,731 741,731 741,605 812,605 812,352 1330,352 1330,272 1402,272 1402,352 1568,352'], [B, '0,333 235,333 235,298 306,298 306,343 870,343 870,303 1008,303']], '#14dede', 3, '3 2') + line([[B, '1017,214 1078,214']], '#14dede', 3, '3 2');
  s += rect(1933.5, A.y(342), A.x(1321), A.y(787), 'none', `stroke="${olive}" stroke-width="2"`) + rect(A.x(1326), B.y(241), B.x(1370), B.y(322), 'none', `stroke="${olive}" stroke-width="2"`);
  [[A, 673, 156, 342], [A, 673, 787, 1183], [B, 590, 166, 240], [B, 590, 322, 434]].forEach(([f, x, y, y2]) => s += seg(f.x(x), f.y(y), f.x(x), f.y(y2), olive, 3));
  s += line([[A, '24,254 430,254 500,252 1568,252'], [B, '0,238 1043,240']], '#8a2020', 1.2);
  const dots = (f, y, xs, c) => xs.split(' ').map(x => `<circle cx="${f.x(+x)}" cy="${f.y(y)}" r="2.500" fill="${c}"/>`).join('');
  s += dots(A, 253, '34 69 99 165 289 366 412 573 655 702 785 815 870 966 1028 1093 1211 1327 1353 1382 1423 1472 1519', '#067006') + dots(A, 253, '128 330 436 495 542 631 933 1068 1145 1252 1306 1495', '#f00') +
    dots(B, 239, '47 109 223 326 377 476 519 542 633 735 792 911 968', '#067006') + dots(B, 239, '133 195 252 274 411 594 656 684 712 769 815 843 883 936 963 986', '#f00');
  s += seg(A.x(995), 797, A.x(995), 1383, '#888', 1.2) + seg(A.x(1359), 781, A.x(1359), 1383, '#888', 1.2);
  [[158, '#800000'], [331, '#b22222'], [353, '#0ff'], [528, '#90ee90'], [732, '#008000'], [842, '#f00'], [902, '#1e90ff'], [894, '#f79646'], [885, '#800000']]
    .forEach(([y, c]) => s += `<circle class="o" cx="${A.x(992)}" cy="${A.y(y)}" r="4" stroke="${c}" stroke-width="1.500"/>`);
  s += arrows(down, A, bar, '12:127 13:237 14:200', '#f00') + `<circle cx="${r1(bar(10))}" cy="807" r="4" fill="#f00"/>`;
  [['499.515074', 649, 325, 832], ['276.431905', 578, 576, 761], ['260.558783', 430, 704, 612], ['182.336199', 63, 1172, 247], ['70.829569', 1252, 351, 1421]].forEach(([t, x, y, x2]) => s += cyanBox(A, x, y, x2, t));
  [['108.314585', 78, 272, 254], ['166.216012', 149, 342, 325], ['170.822044', 712, 277, 889], ['195.073409', 855, 187, 1031]].forEach(([t, x, y, x2]) => s += cyanBox(B, x, y, x2, t));
  s += text(1936, 791, '2019.27.11 19:00:00 O:7495.07 H:7576.12 L:7492.86 C:7563.81 V:2674.381791', '#d8a23c', 'start', 'info');
  s += rect(2833, 791, 2913, 825, '#ff0', 'stroke="#7a7a20"') + text(2872, 815, '59:58', '#000', 'middle', 'timer-s');
  s += seg(2922, 781, 2922, 1383, '#888') + seg(1933, 1383.5, 2922, 1383.5, '#888') + rect(2965, 783, 2977, 794, 'none', 'stroke="#f3e8d8"') + text(2968, 793, 'F', '#f3e8d8');
  s += rect(2724, 1370, 2734, 1383, '#1c3a1c') + rect(2734, 1370, 2922, 1383, '#5a1a1c') + text(2728, 1382, '0', '#f00') + text(2738, 1382, '15.21', '#128012');
  s += tag(2924, 843, 43, '', '#0ff', '#000') + tag(2924, 838.5, 43, '7607.76', '#800000', '#000') + tag(2924, 855, 43, '7576.49', '#faebd7', '#000') + tag(2924, 887, 43, '7519.34', '#b22222', '#000') +
    tag(2924, 915, 43, '7470.18', '#800000', '#000') + tag(2924, 930, 43, '7443.81', '#90ee90', '#000') + tag(2924, 947, 43, '7413.48', '#f79646', '#000') + tag(2924, 1143, 43, '7065.50', '#1e90ff', '#000');
  ['08:00', '11:00', '14:00', '17:00', '', '', '', '05:00', '08:00', '11:00', '14:00', '17:00'].forEach((t, i) => {
    const x = 1987 + 74.5 * i;
    s += seg(x, 1384, x, 1389, '#f3e8d8') + text(x - 5, 1400, t, '#f3e8d8', 'middle');
  });
  s += rect(2202, 1389, 2323, 1402, '#faebd7') + text(2203, 1400, '11/27/2019 7:00:00 PM', '#000') + rect(2323.5, 1389.5, 2449.5, 1401.5, '#000', 'stroke="#888"') + text(2325, 1400, '11/28/2019 12:00:00 AM', '#888');
  document.getElementById('chart-btc').innerHTML = s;
}
```
